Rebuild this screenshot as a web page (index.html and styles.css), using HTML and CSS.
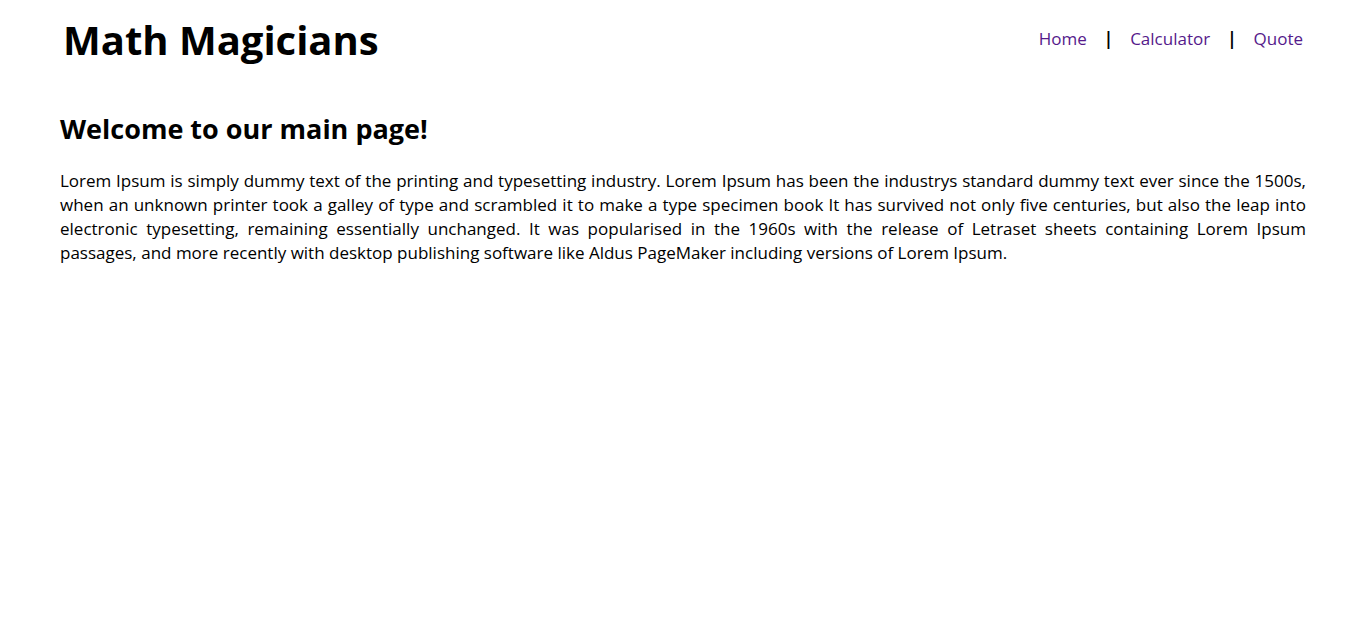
FILE: index.html
```
<!DOCTYPE html>
<html lang="en">
<head>
<meta charset="utf-8">
<title>Math Magicians</title>
<link rel="stylesheet" href="styles.css">
</head>
<body>
<header class="header">
  <h1 class="brand">Math Magicians</h1>
  <nav class="nav">
    <a class="nav-link" href="#home">Home</a>
    <span class="divider">|</span>
    <a class="nav-link" href="#calculator">Calculator</a>
    <span class="divider">|</span>
    <a class="nav-link" href="#quote">Quote</a>
  </nav>
</header>
<main class="main">
  <h2 class="title">Welcome to our main page!</h2>
  <p class="text">Lorem Ipsum is simply dummy text of the printing and typesetting industry. Lorem Ipsum has been the industrys standard dummy text ever since the 1500s, when an unknown printer took a galley of type and scrambled it to make a type specimen book It has survived not only five centuries, but also the leap into electronic typesetting, remaining essentially unchanged. It was popularised in the 1960s with the release of Letraset sheets containing Lorem Ipsum passages, and more recently with desktop publishing software like Aldus PageMaker including versions of Lorem Ipsum.</p>
</main>
</body>
</html>
```
FILE: styles.css
```
body {
  margin: 0;
  background: #fff;
  color: #000;
  font-family: "Open Sans", "Noto Sans", sans-serif;
  font-size: 17px;
  line-height: 24px;
}

.header {
  display: flex;
  justify-content: space-between;
  align-items: center;
  padding: 12px 63px;
}

.brand {
  margin: 0;
  font-size: 40px;
  line-height: 56px;
}

.nav {
  display: flex;
  align-items: center;
  gap: 17px;
  padding-bottom: 2px;
}

.nav-link {
  color: #551a8b;
  text-decoration: none;
}

.divider {
  font-weight: 700;
}

.main {
  padding: 29px 60px;
}

.title {
  margin: 0 0 20px;
  font-size: 27px;
  line-height: 40px;
}

.text {
  margin: 0;
  text-align: justify;
}
```
